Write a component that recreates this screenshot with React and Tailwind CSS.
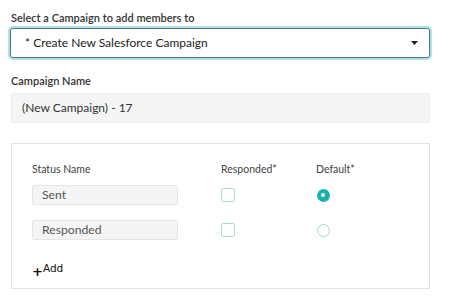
const font = { fontFamily: 'Lato, "Open Sans", sans-serif' };

function StatusRow({ name, isDefault }) {
  return (
    <div className="flex h-[20px] items-center">
      <div className="flex h-[20px] w-[146px] items-center rounded-[2px] border border-[#e6e6e6] bg-[#f5f5f5] pl-[9px] text-[12.2px] text-[#555]">{name}</div>
      <div className="ml-[43px] h-[14px] w-[14px] rounded-[2px] border border-[#abdbda] bg-white" />
      <div className="ml-[81px] flex h-[14px] w-[14px] items-center justify-center rounded-full">
        {isDefault ? (
          <span className="flex h-[13px] w-[13px] items-center justify-center rounded-full bg-[#1ab0ad]">
            <span className="h-[4px] w-[4px] rounded-full bg-white" />
          </span>
        ) : (
          <span className="h-[13px] w-[13px] rounded-full border border-[#9fd7d6] bg-white" />
        )}
      </div>
    </div>
  );
}

export default function App() {
  return (
    <div className="h-[307px] w-[450px] bg-white pl-[10px] pr-[20px] pt-[10px] text-[#333]" style={font}>
      <div className="pl-[1px] text-[11px] font-semibold leading-[15px] text-[#333]">Select a Campaign to add members to</div>
      <div className="mt-[3px] flex h-[30px] items-center rounded-[3px] border border-[#5f6d70] pl-[14px] pr-[11px] text-[12px] text-[#222] shadow-[0_0_0_2px_#a6e5ea]">
        <span className="flex-1">* Create New Salesforce Campaign</span>
        <svg width="7" height="4" viewBox="0 0 7 4"><path d="M0 0h7L3.5 4z" fill="#222" /></svg>
      </div>
      <div className="mt-[15px] pl-[1px] text-[11px] font-semibold leading-[15px] text-[#333]">Campaign Name</div>
      <div className="ml-[1px] mt-[5px] flex h-[30px] items-center rounded-[3px] border border-[#ebebeb] bg-[#f5f5f5] pl-[10px] text-[12px] text-[#333]">(New Campaign) - 17</div>
      <div className="ml-[1px] mt-[20px] h-[146px] border border-[#e3e3e3] pl-[20px] pt-[18px]">
        <div className="flex text-[10.5px] leading-[14px] text-[#444]">
          <span className="w-[189px]">Status Name</span>
          <span className="w-[95px]">Responded*</span>
          <span>Default*</span>
        </div>
        <div className="mt-[9px] flex flex-col gap-[15px]">
          <StatusRow name="Sent" isDefault />
          <StatusRow name="Responded" />
        </div>
        <div className="mt-[23px] flex items-start text-[#111]" style={{ fontFamily: '"DejaVu Sans", sans-serif' }}>
          <span className="mt-[2px] text-[13px] font-bold leading-[13px]">+</span>
          <span className="text-[10.5px] leading-[10px]">Add</span>
        </div>
      </div>
    </div>
  );
}
